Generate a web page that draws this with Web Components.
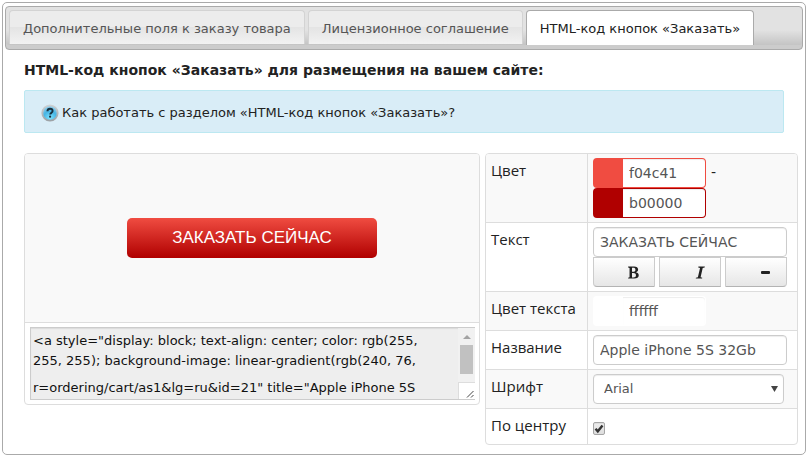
<!DOCTYPE html>
<html lang="ru">
<head>
<meta charset="utf-8">
<title>HTML-код кнопок «Заказать»</title>
<style>
  body {
    margin: 2px;
    background: #fff;
    color: #222;
    font: 13px/20px "DejaVu Sans", Verdana, sans-serif;
  }
</style>
</head>
<body>
<order-page></order-page>

<script>
const BASE = `
  * { box-sizing: border-box; }
  input, select, button, textarea { font: inherit; color: inherit; margin: 0; }
`

function define(tag, html, setup) {
  const template = document.createElement('template')
  template.innerHTML = html
  customElements.define(tag, class extends HTMLElement {
    constructor() {
      super()
      this.attachShadow({ mode: 'open' }).append(template.content.cloneNode(true))
      if (setup) setup(this.shadowRoot, this)
    }
  })
}

// Tab strip
define('tab-bar', `
  <style>
    ${BASE}
    :host {
      display: flex;
      gap: 3px;
      padding: 3px 3px 0;
      border: 1px solid #aaa;
      border-radius: 4px;
      background: linear-gradient(#e2e2e2 55%, #bcbcbc);
      box-shadow: inset 0 -4px #ccc;
    }
  </style>
  <slot></slot>
`)

define('tab-item', `
  <style>
    ${BASE}
    :host { display: block; padding-bottom: 5px; }
    :host([active]) { padding-bottom: 4px; }
    a {
      display: block;
      padding: 8px 13px 5px;
      border: 1px solid #d3d3d3;
      border-bottom: 0;
      border-radius: 4px 4px 0 0;
      background: linear-gradient(#ececec 50%, #e4e4e4 50%, #f2f2f2);
      color: #555;
      text-decoration: none;
      white-space: nowrap;
    }
    :host([active]) a {
      padding-bottom: 6px;
      border-color: #aaa;
      background: #fff;
      color: #212121;
    }
  </style>
  <a href="#"><slot></slot></a>
`)

// Light blue hint with a question badge
define('help-notice', `
  <style>
    ${BASE}
    :host {
      display: flex;
      align-items: center;
      gap: 3px;
      padding: 12px 16px 9px;
      border: 1px solid #bce8f1;
      border-radius: 2px;
      background: #d9edf7;
    }
    svg { flex: none; }
    a { color: #222; text-decoration: none; }
  </style>
  <svg width="18" height="18" viewBox="0 0 18 18" aria-hidden="true">
    <defs>
      <linearGradient id="rim" x1="0" y1="0" x2="0" y2="1">
        <stop offset="0" stop-color="#d0d3d5"/><stop offset="1" stop-color="#9a9fa3"/>
      </linearGradient>
      <radialGradient id="ball" cx=".5" cy=".85" r=".8">
        <stop offset="0" stop-color="#7fe3ff"/><stop offset=".6" stop-color="#45b4e3"/><stop offset="1" stop-color="#8fcdea"/>
      </radialGradient>
    </defs>
    <circle cx="9" cy="9" r="8.600" fill="url(#rim)"/>
    <circle cx="9" cy="9" r="6.800" fill="url(#ball)"/>
    <path d="M6.400 7.200C6.500 5.400 7.600 4.700 9 4.700s2.600.8 2.600 2.200c0 1.700-2.400 1.800-2.400 3.700" fill="none" stroke="#17303d" stroke-width="1.900"/>
    <circle cx="9.100" cy="12.700" r="1.100" fill="#17303d"/>
  </svg>
  <a href="#"><slot></slot></a>
`)

// Order button as the visitor will see it
define('button-preview', `
  <style>
    ${BASE}
    :host {
      display: grid;
      place-items: center;
      padding: 64px 24px;
      background: #f9f9f9;
    }
    a {
      width: 250px;
      border-radius: 5px;
      background: linear-gradient(#f04c41, #b00000);
      color: #fff;
      font: 17px/40px "Liberation Sans", Arial, sans-serif;
      text-align: center;
      text-decoration: none;
    }
  </style>
  <a href="#"><slot></slot></a>
`)

// Generated markup: head and tail of the code
define('code-box', `
  <style>
    ${BASE}
    :host { display: block; padding: 4px 4px 4px 5px; }
    .box {
      display: grid;
      grid-template-columns: 1fr 17px;
      border: 1px solid #ccc;
      border-right: 0;
      background: #eee;
      box-shadow: inset 0 1px 1px rgba(0, 0, 0, .08);
    }
    .text { display: flex; flex-direction: column; }
    textarea {
      display: block;
      width: 100%;
      height: 50px;
      padding: 3px 0 0 2px;
      border: 0;
      background: transparent;
      color: #111;
      resize: none;
      overflow: hidden;
      white-space: pre;
    }
    .tail { height: 21px; padding-top: 0; }
    .side { display: flex; flex-direction: column; align-items: center; background: #f1f1f1; }
    .up {
      margin: 7px 0 6px;
      border: 4px solid transparent;
      border-top: 0;
      border-bottom-color: #a3a3a3;
    }
    .thumb { width: 13px; height: 29px; background: #c1c1c1; }
    .grip { margin-top: auto; width: 17px; height: 17px; background: #fff; border-left: 1px solid #ddd; border-top: 1px solid #ddd; }
    svg { display: block; }
  </style>
  <div class="box">
    <div class="text">
      <textarea class="head" readonly aria-label="HTML-код, начало"></textarea>
      <textarea class="tail" readonly aria-label="HTML-код, конец"></textarea>
    </div>
    <div class="side">
      <span class="up"></span>
      <span class="thumb"></span>
      <span class="grip">
        <svg width="16" height="16" viewBox="0 0 16 16"><path d="M8 14.500l6.500-6.500M12 14.500l2.500-2.500" stroke="#444" fill="none"/></svg>
      </span>
    </div>
  </div>
`, root => {
  root.querySelector('.head').value =
    '<a style="display: block; text-align: center; color: rgb(255,\n255, 255); background-image: linear-gradient(rgb(240, 76,'
  root.querySelector('.tail').value = 'r=ordering/cart/as1&lg=ru&id=21" title="Apple iPhone 5S'
})

define('setting-row', `
  <style>
    ${BASE}
    :host {
      display: grid;
      grid-template-columns: 102px 1fr;
      border-top: 1px solid #ddd;
    }
    :host(:first-of-type) { border-top: 0; }
    :host(:nth-of-type(odd)) { background: #f9f9f9; }
    .name {
      padding: 6px 5px 8px;
      border-right: 1px solid #ddd;
      font: 15px/20px "Open Sans", sans-serif;
      white-space: nowrap;
    }
    .value { padding: 4px 5px; }
  </style>
  <div class="name"><slot name="name"></slot></div>
  <div class="value"><slot></slot></div>
`)

define('settings-form', `
  <style>
    ${BASE}
    :host {
      display: block;
      border: 1px solid #ddd;
      border-radius: 4px;
      overflow: hidden;
      font-size: 14px;
    }
    input, select {
      display: block;
      width: 194px;
      height: 30px;
      padding: 4px 6px;
      border: 1px solid #ccc;
      border-radius: 4px;
      background: #fff;
      color: #555;
      box-shadow: inset 0 1px 1px rgba(0, 0, 0, .075);
    }
    .color { width: 113px; border-color: var(--color); border-left-width: 30px; }
    .pair { display: flex; gap: 5px; line-height: 28px; }
    .tools { display: flex; gap: 4px; }
    button {
      width: 62px;
      height: 30px;
      padding: 0 0 0 18px;
      border: 1px solid #ccc;
      border-bottom-color: #b3b3b3;
      background: linear-gradient(#fff, #e6e6e6);
    }
    button:first-child { border-bottom-left-radius: 4px; }
    button:last-child { border-bottom-right-radius: 4px; }
    button svg { display: block; margin: auto; }
    .select, .check { display: grid; width: 191px; align-items: center; }
    .select > *, .check > * { grid-area: 1 / 1; }
    .select svg { justify-self: end; margin-right: 6px; pointer-events: none; }
    select { width: 100%; padding: 4px 10px; appearance: none; font-size: 13px; }
    .check { width: 13px; margin: 9px 0 5px; }
    .check svg { display: none; pointer-events: none; }
    .check input:checked + svg { display: block; }
    .check input {
      appearance: none;
      width: 12px;
      height: 13px;
      padding: 0;
      border-color: #a5a5a5;
      border-radius: 2px;
      background: linear-gradient(#eee, #ddd);
    }
  </style>
  <setting-row>
    <label slot="name" for="from">Цвет</label>
    <div class="pair"><input class="color" id="from" value="f04c41" style="--color: #f04c41"><span>-</span></div>
    <input class="color" value="b00000" aria-label="Цвет, конец градиента" style="--color: #b00000">
  </setting-row>
  <setting-row>
    <label slot="name" for="caption">Текст</label>
    <input id="caption" value="ЗАКАЗАТЬ СЕЙЧАС">
    <div class="tools">
      <button type="button" aria-label="Полужирный">
        <svg width="15" height="15" viewBox="0 0 14 14"><path fill="#222" fill-rule="evenodd" d="M2 1.500h5.500c2.400 0 3.800 1 3.800 2.800 0 1.300-.8 2.100-2 2.500 1.600.3 2.600 1.300 2.600 2.800 0 2-1.600 3.100-4.200 3.100H2v-.9l1.300-.3V2.700L2 2.400zM5.600 2.600v3.700h1c1.500 0 2.200-.6 2.200-1.900S8 2.600 6.700 2.600zM5.600 7.400v4.200h1.200c1.600 0 2.500-.7 2.500-2.100S8.400 7.400 6.700 7.400z"/></svg>
      </button>
      <button type="button" aria-label="Курсив">
        <svg width="15" height="15" viewBox="0 0 14 14"><path fill="#222" d="M6 1.500h6l-.2.9-1.800.3-2 8.800 1.600.3-.2.900H3.500l.2-.9 1.800-.3 2-8.800-1.700-.3z"/></svg>
      </button>
      <button type="button" aria-label="Обычный">
        <svg width="15" height="15" viewBox="0 0 15 15"><rect x="3" y="6" width="9" height="3" rx="1" fill="#222"/></svg>
      </button>
    </div>
  </setting-row>
  <setting-row>
    <label slot="name" for="text-color">Цвет текста</label>
    <input class="color" id="text-color" value="ffffff" style="--color: #fff">
  </setting-row>
  <setting-row>
    <label slot="name" for="product">Название</label>
    <input id="product" value="Apple iPhone 5S 32Gb">
  </setting-row>
  <setting-row>
    <label slot="name" for="font">Шрифт</label>
    <div class="select">
      <select id="font"><option>Arial</option></select>
      <svg width="7" height="6" viewBox="0 0 7 6"><path d="M0 0h7L3.500 6z" fill="#444"/></svg>
    </div>
  </setting-row>
  <setting-row>
    <label slot="name" for="center">По центру</label>
    <div class="check">
      <input type="checkbox" id="center" checked>
      <svg width="12" height="13" viewBox="0 0 12 13"><path d="M2.500 6.700l2.300 2.600L9.500 3.500" fill="none" stroke="#333" stroke-width="2.400"/></svg>
    </div>
  </setting-row>
`)

define('order-page', `
  <style>
    ${BASE}
    :host {
      display: block;
      box-sizing: border-box;
      padding: 3px 2px 9px;
      border: 1px solid #aaa;
      border-radius: 5px;
    }
    main { padding: 10px 5px 0 19px; }
    h1 { margin: 0 0 10px; font-size: 14px; line-height: 20px; }
    help-notice { margin: 0 14px 20px 0; }
    .columns { display: grid; grid-template-columns: 456fr 313fr; gap: 5px; align-items: start; }
    .result { border: 1px solid #ddd; border-radius: 4px; overflow: hidden; }
    code-box { border-top: 1px solid #ddd; }
  </style>
  <tab-bar>
    <tab-item>Дополнительные поля к заказу товара</tab-item>
    <tab-item>Лицензионное соглашение</tab-item>
    <tab-item active>HTML-код кнопок «Заказать»</tab-item>
  </tab-bar>
  <main>
    <h1>HTML-код кнопок «Заказать» для размещения на вашем сайте:</h1>
    <help-notice>Как работать с разделом «HTML-код кнопок «Заказать»?</help-notice>
    <div class="columns">
      <section class="result">
        <button-preview>ЗАКАЗАТЬ СЕЙЧАС</button-preview>
        <code-box></code-box>
      </section>
      <settings-form></settings-form>
    </div>
  </main>
`)
</script>
</body>
</html>
